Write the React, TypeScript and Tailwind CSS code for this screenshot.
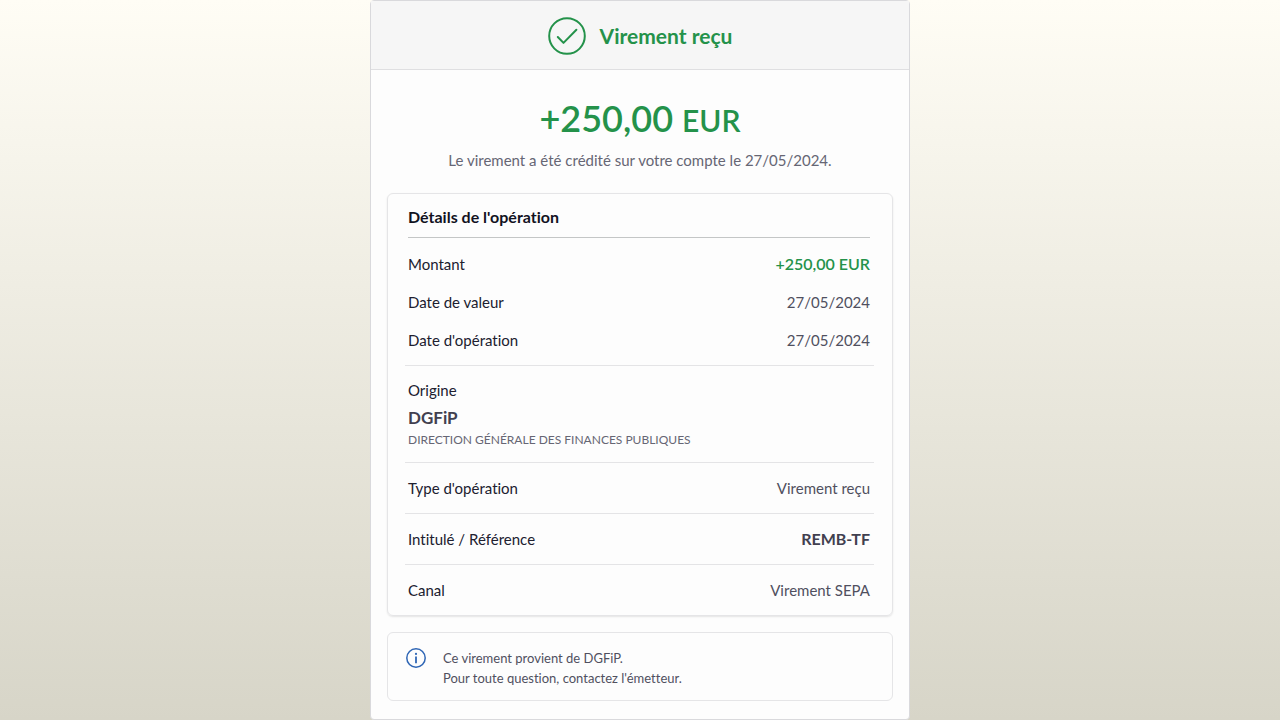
import clsx from "clsx";

type RowProps = { label: string; value: string; className: string; valueClassName?: string };

function DetailRow({ label, value, className, valueClassName = "text-[#50505f]" }: RowProps) {
    return (
        <div className={clsx("flex items-center justify-between gap-4 pl-[3px] pr-1", className)}>
            <dt>{label}</dt>
            <dd className={valueClassName}>{value}</dd>
        </div>
    );
}

function CheckCircle() {
    return (
        <svg viewBox="0 0 38 38" className="size-[38px] shrink-0" fill="none" stroke="currentColor" strokeWidth="2" aria-hidden="true">
            <circle cx="19" cy="19" r="17.8" />
            <path d="M9.8 20 15.5 25.9 28.4 12.8" strokeLinecap="round" strokeLinejoin="round" />
        </svg>
    );
}

function InfoCircle() {
    return (
        <svg viewBox="0 0 20 20" className="size-5 shrink-0 text-[#2f66b5]" fill="none" aria-hidden="true">
            <circle cx="10" cy="10" r="9.2" stroke="currentColor" strokeWidth="1.5" />
            <circle cx="10" cy="5.9" r="1.1" fill="currentColor" />
            <path d="M10 8.4V15.2" stroke="currentColor" strokeWidth="1.8" />
        </svg>
    );
}

export default function App() {
    return (
        <div className="flex min-h-screen justify-center bg-linear-to-b from-[#fffdf5] to-[#d7d5c8] font-['Lato',sans-serif] text-[#20202f] [font-variant-ligatures:none]">
            <main className="flex w-full max-w-[540px] flex-col rounded-sm border border-[#d9d9dc] bg-[#fdfdfd]">
                <header className="flex items-center justify-center gap-3.5 border-b border-[#dfdfe1] bg-[#f6f6f6] pt-4 pb-3.5 text-[#24924a]">
                    <CheckCircle />
                    <h1 className="text-[21px] leading-8 font-bold">Virement reçu</h1>
                </header>

                <section className="px-4 pt-[26px] text-center">
                    <p className="text-[36px] leading-[44px] font-semibold text-[#24924a]">
                        +250,00 <span className="text-[30px]">EUR</span>
                    </p>
                    <p className="pt-1.5 text-[15px] leading-6 text-[#666674]">Le virement a été crédité sur votre compte le 27/05/2024.</p>
                </section>

                <section className="mx-4 mt-[21px] rounded-md border border-[#e5e5e7] pr-[18px] pl-[17px] text-[15px] shadow-[0_1px_2px_rgba(0,0,0,0.1)]">
                    <h2 className="ml-[3px] mr-1 border-b border-[#c4c6c6] pt-[11px] pb-2 text-base leading-6 font-bold text-[#12121f]">Détails de l'opération</h2>
                    <dl className="divide-y divide-[#e4e4e6]">
                        <div className="pt-[7px] pb-1.5">
                            <DetailRow label="Montant" value="+250,00 EUR" className="h-[38px]" valueClassName="text-base font-semibold text-[#24924a]" />
                            <DetailRow label="Date de valeur" value="27/05/2024" className="h-[38px]" />
                            <DetailRow label="Date d'opération" value="27/05/2024" className="h-[38px]" />
                        </div>
                        <div className="pt-3 pb-3 pl-[3px]">
                            <dt className="leading-6">Origine</dt>
                            <dd>
                                <p className="pt-1 text-[17px] leading-6 font-bold text-[#41404f]">DGFiP</p>
                                <p className="text-xs leading-5 text-[#666674]">DIRECTION GÉNÉRALE DES FINANCES PUBLIQUES</p>
                            </dd>
                        </div>
                        <DetailRow label="Type d'opération" value="Virement reçu" className="h-[51px]" />
                        <DetailRow label="Intitulé / Référence" value="REMB-TF" className="h-[51px]" valueClassName="text-base font-bold text-[#41404f]" />
                        <DetailRow label="Canal" value="Virement SEPA" className="h-[50px]" />
                    </dl>
                </section>

                <aside className="mx-4 mt-4 mb-[18px] flex gap-[17px] rounded-md border border-[#e5e5e7] px-[18px] pt-[15px] pb-3">
                    <InfoCircle />
                    <p className="text-[13px] leading-5 text-[#50505f]">
                        Ce virement provient de DGFiP.
                        <br />
                        Pour toute question, contactez l'émetteur.
                    </p>
                </aside>
            </main>
        </div>
    );
}
